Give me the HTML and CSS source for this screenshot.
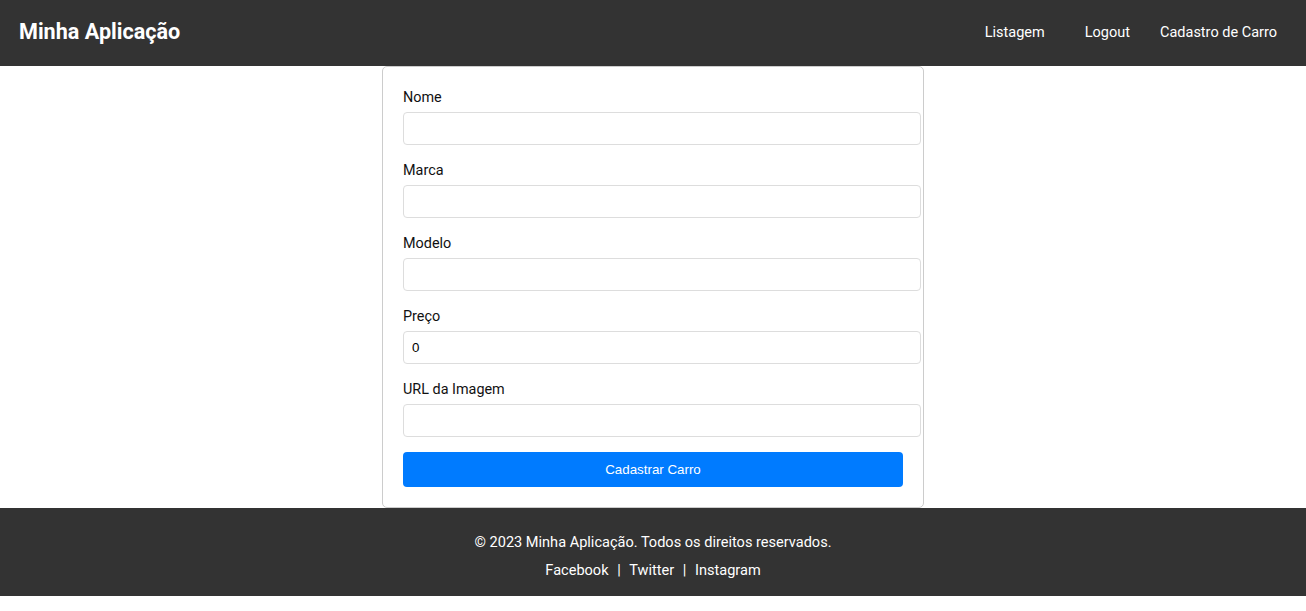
FILE: index.html
```html
<!DOCTYPE html>
<html lang="pt-BR">
<head>
<meta charset="utf-8">
<title>Minha Aplicação</title>
<link rel="stylesheet" href="styles.css">
</head>
<body>
<header class="topbar">
  <h1 class="brand">Minha Aplicação</h1>
  <nav class="nav">
    <a class="nav-link nav-list" href="#">Listagem</a>
    <a class="nav-link nav-logout" href="#">Logout</a>
    <a class="nav-link" href="#">Cadastro de Carro</a>
  </nav>
</header>
<main class="main">
  <form class="card">
    <div class="group">
      <label class="label">Nome</label>
      <input class="input" type="text">
    </div>
    <div class="group">
      <label class="label">Marca</label>
      <input class="input" type="text">
    </div>
    <div class="group">
      <label class="label">Modelo</label>
      <input class="input" type="text">
    </div>
    <div class="group">
      <label class="label">Preço</label>
      <input class="input" type="text" value="0">
    </div>
    <div class="group">
      <label class="label">URL da Imagem</label>
      <input class="input" type="text">
    </div>
    <button class="btn" type="button">Cadastrar Carro</button>
  </form>
</main>
<footer class="footer">
  <p class="copy">© 2023 Minha Aplicação. Todos os direitos reservados.</p>
  <p class="social"><a class="social-link" href="#">Facebook</a> | <a class="social-link" href="#">Twitter</a> | <a class="social-link" href="#">Instagram</a></p>
</footer>
</body>
</html>
```
FILE: styles.css
```css
* { box-sizing: content-box; }
body {
  margin: 0;
  font-family: Roboto, "Liberation Sans", sans-serif;
  font-size: 14.4px;
  color: #111;
  background: #fff;
}
.topbar {
  height: 66px;
  background: #333;
  color: #fff;
  display: flex;
  align-items: center;
  justify-content: space-between;
  padding: 0 29px 0 19px;
}
.brand {
  margin: 0 0 2px;
  font-size: 21.6px;
  line-height: 26px;
  font-weight: 700;
}
.nav { display: flex; align-items: center; margin-bottom: 2px; }
.nav-link {
  color: #fff;
  text-decoration: none;
  font-size: 14.5px;
}
.nav-list { margin-right: 40px; }
.nav-logout { margin-right: 30px; }
.main {
  display: flex;
  justify-content: center;
}
.card {
  width: 500px;
  padding: 20px;
  border: 1px solid #ccc;
  border-radius: 5px;
  background: #fff;
  display: flex;
  flex-direction: column;
}
.group {
  display: flex;
  flex-direction: column;
  margin-bottom: 15px;
}
.label {
  font-size: 14.4px;
  line-height: 20px;
  padding-top: 1px;
  margin-bottom: 4px;
  color: #111;
}
.input {
  width: 100%;
  padding: 8px;
  border: 1px solid #ddd;
  border-radius: 4px;
  font-family: "Liberation Sans", Arial, sans-serif;
  font-size: 13.33px;
  line-height: 15px;
  color: #000;
  margin: 0;
  outline: none;
}
.btn {
  width: 100%;
  padding: 10px;
  box-sizing: border-box;
  border: none;
  border-radius: 4px;
  background: #007bff;
  color: #fff;
  font-family: "Liberation Sans", Arial, sans-serif;
  font-size: 13.33px;
  line-height: 15px;
  margin: 0;
}
.footer {
  background: #333;
  color: #fff;
  text-align: center;
  padding: 24px 0 13px;
  font-size: 14.55px;
}
.footer p { margin: 0; line-height: 22px; }
.footer .copy { margin-bottom: 6px; }
.social { padding-bottom: 1px; }
.social-link { color: #fff; text-decoration: none; margin: 0 5px; }
```
